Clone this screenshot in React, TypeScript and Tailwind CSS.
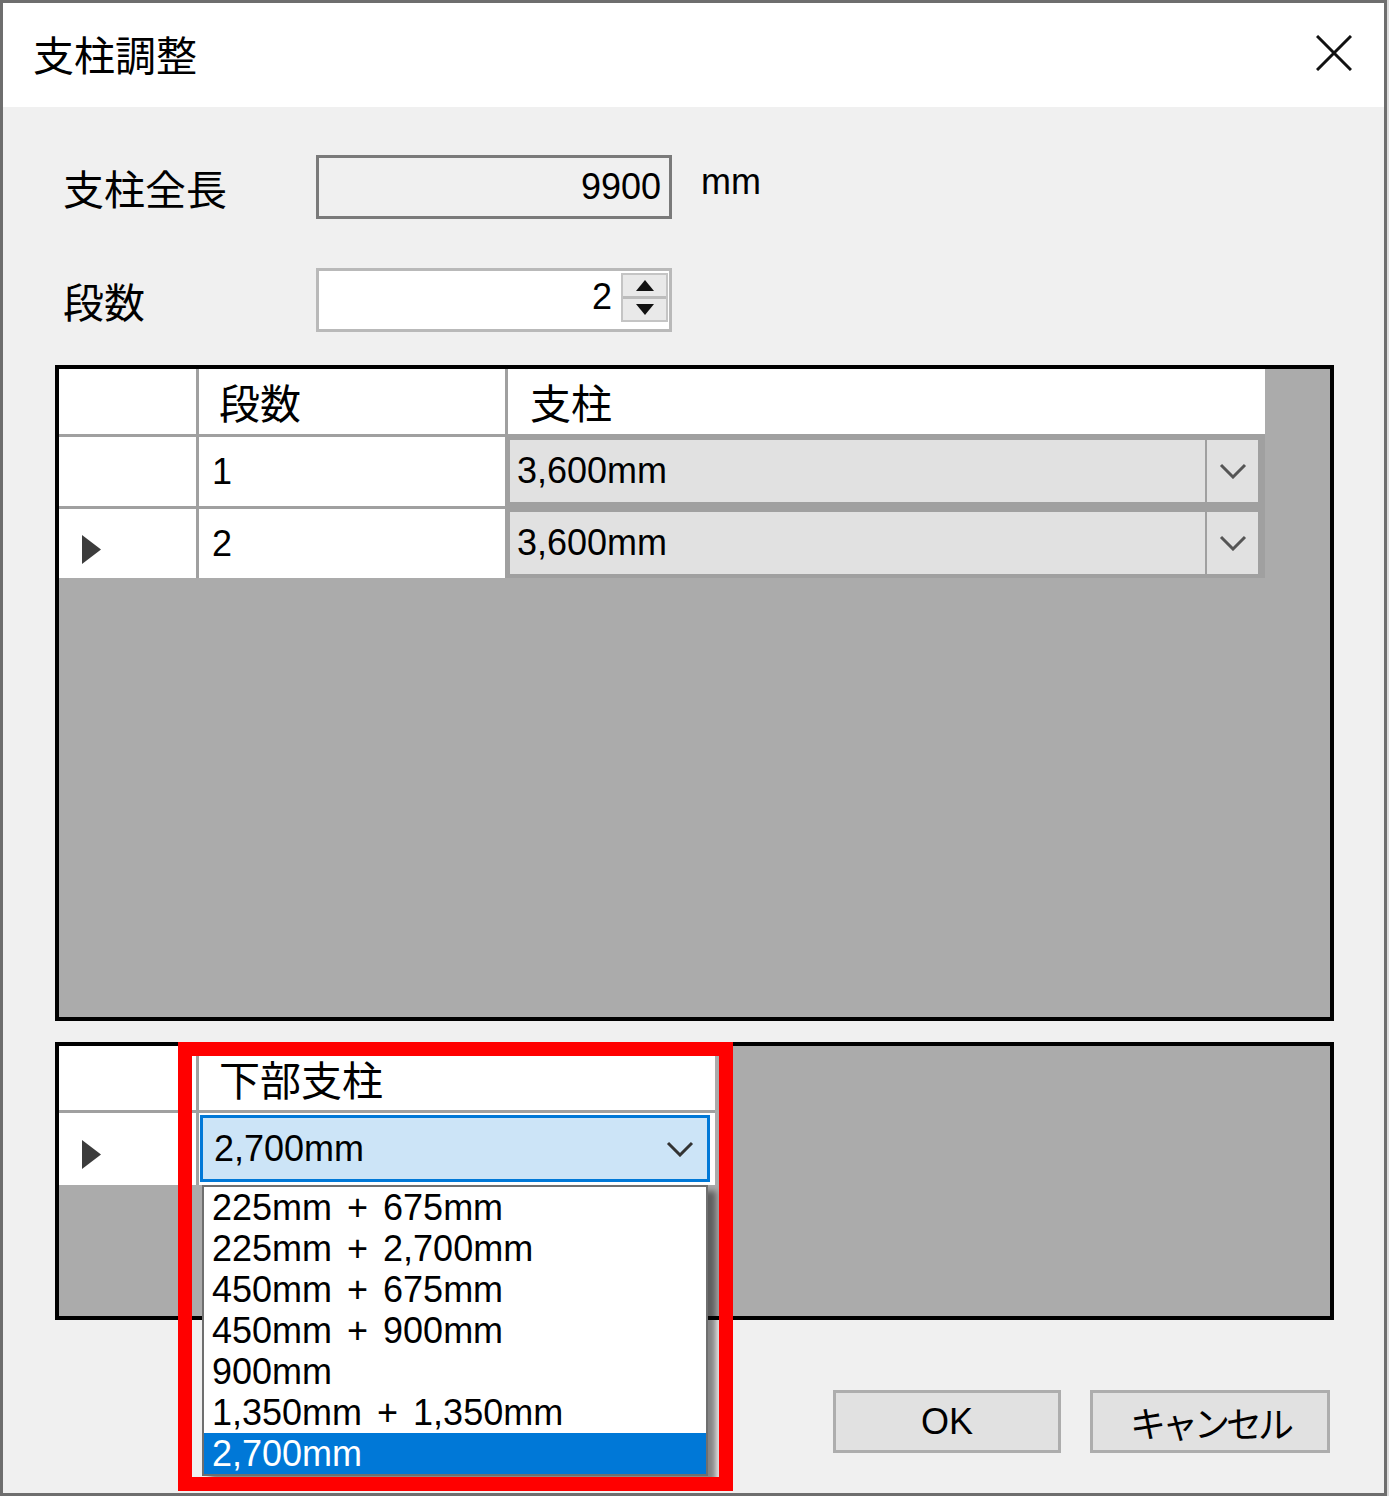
import React from "react";

const ITEMS = [
  "225mm + 675mm",
  "225mm + 2,700mm",
  "450mm + 675mm",
  "450mm + 900mm",
  "900mm",
  "1,350mm + 1,350mm",
  "2,700mm",
];

// 日本語ラベル用
const jp = "text-[41px] font-['Noto_Sans_CJK_JP',sans-serif]";

const Chevron = ({ className = "" }: { className?: string }) => (
  <svg width="28" height="16" viewBox="0 0 28 16" fill="none" className={className}>
    <polyline points="2,2 14,14 26,2" stroke="currentColor" strokeWidth="3" />
  </svg>
);

const RowMark = () => (
  <svg width="19" height="29" viewBox="0 0 19 29">
    <polygon points="0,0 19,14.5 0,29" fill="#3c3c3c" />
  </svg>
);

const ComboCell = ({ value }: { value: string }) => (
  <div className="w-[757px] pl-[2px] pr-[7px] pt-[3px] pb-[4px]">
    <div className="flex h-full gap-[2px]">
      <div className="flex-1 bg-[#e1e1e1] flex items-center pl-[7px]">{value}</div>
      <div className="w-[51px] bg-[#e1e1e1] flex items-center justify-center text-[#555]">
        <Chevron />
      </div>
    </div>
  </div>
);

export default function App() {
  return (
    <div className="w-[1389px] h-[1496px] bg-[#dcdcdc] overflow-hidden">
      <div className="relative w-[1387px] h-[1496px] border-[3px] border-[#6e6e6e] bg-[#f0f0f0] flex flex-col text-black text-[36px] leading-none font-['Liberation_Sans','Noto_Sans_CJK_JP',sans-serif]">
        {/* タイトルバー */}
        <div className="h-[104px] shrink-0 bg-white flex items-center justify-between pl-[30px] pr-[32px]">
          <span className={`${jp} -mt-[4px]`}>支柱調整</span>
          <svg width="36" height="36" viewBox="0 0 36 36" fill="none" className="-mt-[4px]">
            <path d="M1 1 L35 35 M35 1 L1 35" stroke="#111" strokeWidth="3" />
          </svg>
        </div>

        <div className="flex flex-col pl-[52px] pr-[50px] pt-[48px]">
          {/* 支柱全長 */}
          <div className="flex items-center h-[64px]">
            <div className={`w-[253px] ml-[8px] ${jp}`}>支柱全長</div>
            <div className="w-[356px] h-full border-[3px] border-[#7a7a7a] bg-[#f0f0f0] flex items-center justify-end pr-[8px]">
              9900
            </div>
            <div className="ml-[29px] mb-[10px]">mm</div>
          </div>

          {/* 段数 */}
          <div className="flex items-center h-[64px] mt-[49px]">
            <div className={`w-[253px] ml-[8px] ${jp}`}>段数</div>
            <div className="w-[356px] h-full border-[3px] border-[#b9b9b9] bg-white flex items-start justify-end pr-[1px] pt-[2px]">
              <span className="mt-[6px] mr-[9px]">2</span>
              <div className="w-[47px] h-[49px] border-[2px] border-[#c4c4c4] bg-[#e9e9e9] flex flex-col">
                <div className="flex-1 flex items-center justify-center border-b-[3px] border-[#bcbcbc]">
                  <svg width="18" height="11" viewBox="0 0 18 11">
                    <polygon points="9,0 18,11 0,11" fill="#111" />
                  </svg>
                </div>
                <div className="flex-1 flex items-center justify-center">
                  <svg width="18" height="11" viewBox="0 0 18 11">
                    <polygon points="0,0 18,0 9,11" fill="#111" />
                  </svg>
                </div>
              </div>
            </div>
          </div>

          {/* 上段グリッド */}
          <div className="mt-[33px] h-[656px] border-4 border-black bg-[#ababab]">
            <div className="w-fit flex flex-col gap-[3px] bg-[#a0a0a0]">
              <div className="flex gap-[3px] h-[65px]">
                <div className="w-[137px] bg-white" />
                <div className={`w-[306px] bg-white flex items-center pl-[20px] ${jp}`}>段数</div>
                <div className={`w-[757px] bg-white flex items-center pl-[22px] ${jp}`}>支柱</div>
              </div>
              {["1", "2"].map((n) => (
                <div key={n} className="flex gap-[3px] h-[69px]">
                  <div className="w-[137px] bg-white flex items-center pl-[23px] pt-[12px]">
                    {n === "2" && <RowMark />}
                  </div>
                  <div className="w-[306px] bg-white flex items-center pl-[13px]">{n}</div>
                  <ComboCell value="3,600mm" />
                </div>
              ))}
            </div>
          </div>

          {/* 下段グリッド */}
          <div className="relative mt-[21px] h-[278px] border-4 border-black bg-[#ababab]">
            <div className="w-fit flex flex-col gap-[3px] bg-[#a0a0a0]">
              <div className="flex gap-[3px] h-[64px]">
                <div className="w-[137px] bg-white" />
                <div className={`w-[516px] bg-white flex items-center pl-[20px] ${jp}`}>下部支柱</div>
              </div>
              <div className="flex gap-[3px] h-[72px]">
                <div className="w-[137px] bg-white flex items-center pl-[23px] pt-[10px]">
                  <RowMark />
                </div>
                <div className="relative w-[516px] bg-white pl-[1px] pr-[5px] pt-[2px] pb-[3px]">
                  <div className="h-full border-[3px] border-[#0078d7] bg-[#cce4f7] flex items-center justify-between pl-[11px] pr-[13px]">
                    <span>2,700mm</span>
                    <Chevron className="text-[#333]" />
                  </div>
                  {/* ドロップダウン */}
                  <div className="absolute left-[3px] top-[72px] w-[506px] border-2 border-[#6f6f6f] bg-white shadow-[8px_6px_6px_rgba(0,0,0,0.45)] [word-spacing:5px]">
                    {ITEMS.map((it, i) => (
                      <div
                        key={it}
                        className={
                          i === ITEMS.length - 1
                            ? "h-[41px] flex items-center pl-[8px] bg-[#0078d7] text-white"
                            : "h-[41px] flex items-center pl-[8px]"
                        }
                      >
                        {it}
                      </div>
                    ))}
                  </div>
                </div>
              </div>
            </div>
            {/* 強調枠 */}
            <div className="absolute left-[119px] top-[-4px] w-[555px] h-[449px] border-[14px] border-[#ff0000]" />
          </div>

          {/* ボタン */}
          <div className="mt-[70px] mr-[4px] flex justify-end gap-[29px]">
            <button className="w-[228px] h-[63px] bg-[#e1e1e1] border-[3px] border-[#adadad] flex items-center justify-center">
              OK
            </button>
            <button className="w-[240px] h-[63px] bg-[#e1e1e1] border-[3px] border-[#adadad] flex items-center justify-center text-[36px] tracking-[-4px] font-['Noto_Sans_CJK_JP',sans-serif]">
              キャンセル
            </button>
          </div>
        </div>
      </div>
    </div>
  );
}
